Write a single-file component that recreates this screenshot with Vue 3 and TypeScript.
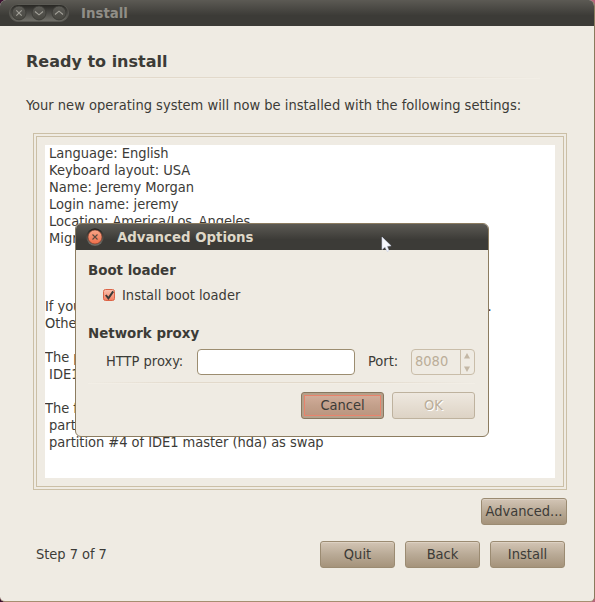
<script setup lang="ts">
import { ref } from 'vue'

const summary: string = [
  ' Language: English',
  ' Keyboard layout: USA',
  ' Name: Jeremy Morgan',
  ' Login name: jeremy',
  ' Location: America/Los_Angeles',
  ' Migration Assistant:',
  '',
  '',
  '',
  'If you continue, the changes listed below will be written to the disks.',
  'Otherwise, you will be able to make further changes manually.',
  '',
  'The partition tables of the following devices are changed:',
  ' IDE1 master (hda)',
  '',
  'The following partitions are going to be formatted:',
  ' partition #1 of IDE1 master (hda) as ext4',
  ' partition #4 of IDE1 master (hda) as swap',
].join('\n')

const proxy = ref('')
const installLoader = ref(true)
const steps: string[] = ['Quit', 'Back', 'Install']
</script>

<template>
  <div class="desktop">
    <main class="window">
      <header class="titlebar">
        <svg class="controls" width="60" height="18" viewBox="0 0 60 18">
          <defs>
            <linearGradient id="pill" x1="0" y1="0" x2="0" y2="1">
              <stop offset="0" stop-color="#252421" />
              <stop offset="1" stop-color="#73726c" />
            </linearGradient>
            <linearGradient id="knob" x1="0" y1="0" x2="0" y2="1">
              <stop offset="0" stop-color="#5d5c57" />
              <stop offset="1" stop-color="#474640" />
            </linearGradient>
          </defs>
          <rect x="0.5" y="0.5" width="59" height="17" rx="8.5" fill="url(#pill)" stroke="#5a5953" />
          <g fill="url(#knob)" stroke="#393834" stroke-width="0.8">
            <circle cx="10" cy="9" r="7" />
            <circle cx="30" cy="9" r="7" />
            <circle cx="50" cy="9" r="7" />
          </g>
          <g fill="none" stroke="#a3a199" stroke-width="1.1">
            <path d="M7.3 6.3l5.4 5.4M12.7 6.3l-5.4 5.4" />
            <path d="M26 7.5l4 3.4 4-3.4M46 10.5l4-3.4 4 3.4" />
          </g>
        </svg>
        <span class="title">Install</span>
      </header>
      <section class="page">
        <h1>Ready to install</h1>
        <div class="rule"></div>
        <p class="intro">Your new operating system will now be installed with the following settings:</p>
        <div class="frame"><div class="inner"><pre class="summary">{{ summary }}</pre></div></div>
        <div class="advanced-row"><button class="btn advanced">Advanced...</button></div>
        <footer class="nav">
          <span class="step">Step 7 of 7</span>
          <button v-for="s in steps" :key="s" class="btn">{{ s }}</button>
        </footer>
      </section>
    </main>

    <div class="dialog">
      <header class="dialog-bar">
        <svg class="close" width="18" height="18" viewBox="0 0 18 18">
          <defs>
            <linearGradient id="red" x1="0" y1="0" x2="0" y2="1">
              <stop offset="0" stop-color="#f8a688" />
              <stop offset="1" stop-color="#ef6e4a" />
            </linearGradient>
            <linearGradient id="ring" x1="0" y1="0" x2="0" y2="1">
              <stop offset="0" stop-color="#22211e" />
              <stop offset="1" stop-color="#77756e" />
            </linearGradient>
          </defs>
          <circle cx="9" cy="9" r="8.7" fill="url(#ring)" />
          <circle cx="9" cy="9" r="7" fill="url(#red)" stroke="#7b3523" stroke-width="0.6" />
          <path d="M6.5 6.5l5 5M11.5 6.5l-5 5" stroke="#5b4a40" stroke-width="1.1" />
        </svg>
        <span class="title">Advanced Options</span>
      </header>
      <div class="dialog-body">
        <h2>Boot loader</h2>
        <label class="check">
          <input v-model="installLoader" type="checkbox" />
          <svg width="13" height="13" viewBox="0 0 13 13">
            <defs>
              <linearGradient id="box" x1="0" y1="0" x2="0" y2="1">
                <stop offset="0" stop-color="#fbc3b0" />
                <stop offset="1" stop-color="#f47d5f" />
              </linearGradient>
            </defs>
            <rect x="0.5" y="0.5" width="11" height="11" rx="2" fill="url(#box)" stroke="#dc6446" />
            <path v-if="installLoader" d="M2.8 6l2.6 3.4L10.2 2.4" fill="none" stroke="#3c3b37" stroke-width="2" />
          </svg>
          <span>Install boot loader</span>
        </label>
        <h2>Network proxy</h2>
        <div class="proxy">
          <span class="proxy-label">HTTP proxy:</span>
          <input v-model="proxy" class="entry" type="text" />
          <span class="port-label">Port:</span>
          <div class="spin">
            <span class="value">8080</span>
            <svg width="13" height="24" viewBox="0 0 13 24">
              <g fill="#c3b7a5">
                <path d="M3 8.5L6 3l3 5.5z" />
                <path d="M3 16.5h6L6 22z" />
              </g>
            </svg>
          </div>
        </div>
        <div class="rule dialog-rule"></div>
        <div class="actions">
          <button class="btn cancel">Cancel</button>
          <button class="btn ok" disabled>OK</button>
        </div>
      </div>
    </div>

    <svg class="pointer" width="12" height="18" viewBox="0 0 12 18">
      <path d="M1 1v12.6l3-2.7 2 4.3q1.2 1 1.8-.6L6.2 10.3l3.9-.5z" fill="#f5f7fc" stroke="#c7cfe4" stroke-width="0.6" />
    </svg>
  </div>
</template>

<style>
body {
  margin: 0;
}
</style>

<style scoped>
.desktop {
  position: relative;
  width: 595px;
  height: 602px;
  overflow: hidden;
  background: linear-gradient(90deg, #3c1130 50%, #b8647c 50%);
  font-family: 'DejaVu Sans Condensed', 'DejaVu Sans', sans-serif;
  font-stretch: condensed;
  font-size: 14.53px;
  line-height: 17px;
  color: #3c3b37;
}
.window {
  box-sizing: border-box;
  height: 602px;
  display: flex;
  flex-direction: column;
  background: #efebe3;
  border-right: 1px solid #8a7a5c;
  border-bottom: 1px solid #a68e70;
  border-radius: 6px 6px 5px 5px;
  overflow: hidden;
}
.titlebar,
.dialog-bar {
  box-sizing: border-box;
  height: 26px;
  flex: none;
  display: flex;
  align-items: center;
  background: linear-gradient(#5c5a54, #3c3b37 60%);
}
.titlebar {
  padding-left: 9px;
}
.title {
  font-family: 'DejaVu Sans', sans-serif;
  font-stretch: normal;
  font-weight: bold;
  font-size: 13.33px;
  color: #908e87;
}
.titlebar .title {
  margin-left: 12px;
}
.page {
  padding: 26px 27px 0 26px;
}
h1,
h2,
p,
pre {
  margin: 0;
}
h1,
h2 {
  font-family: 'DejaVu Sans', sans-serif;
  font-stretch: normal;
  font-weight: bold;
}
h1 {
  font-size: 16px;
  line-height: 19px;
}
.rule {
  height: 1px;
  margin: 6px 27px 0 0;
  background: linear-gradient(90deg, #efebe3, #e2d9cb 25%, #e2d9cb 70%, #efebe3);
  border-bottom: 1px solid #f2eee6;
}
.intro {
  margin-top: 18px;
  white-space: nowrap;
}
.frame {
  margin: 19px 0 0 7px;
  padding: 2px;
  border: 1px solid #cbbfa6;
}
.inner {
  padding: 8px;
  border: 1px solid #cbbfa6;
}
.summary {
  box-sizing: border-box;
  height: 333px;
  background: #fff;
  font: inherit;
  letter-spacing: -0.04px;
  overflow: hidden;
}
.advanced-row {
  display: flex;
  justify-content: flex-end;
  margin-top: 8px;
}
.btn {
  box-sizing: border-box;
  width: 75px;
  height: 27px;
  padding: 0;
  border: 1px solid #9b8b72;
  border-radius: 3px;
  font: inherit;
  text-align: center;
  white-space: nowrap;
  color: #3c3b37;
  background: linear-gradient(#d3c5b5, #b9aa96 50%, #a5937b);
  box-shadow: inset 0 1px #ddd1c3;
}
.advanced {
  width: 86px;
}
.nav {
  display: flex;
  align-items: center;
  gap: 10px;
  margin-top: 16px;
  padding: 0 2px 0 10px;
}
.step {
  flex: 1;
  letter-spacing: -0.05px;
}
.dialog {
  position: absolute;
  left: 75px;
  top: 223px;
  box-sizing: border-box;
  width: 414px;
  height: 214px;
  border: 1px solid #8c7c60;
  border-radius: 6px;
  background: #efebe3;
  overflow: hidden;
}
.dialog-bar {
  padding-left: 10px;
}
.dialog-bar .title {
  margin-left: 13px;
  color: #dfd8c8;
}
.dialog-body {
  padding: 12px 13px 0 12px;
}
h2 {
  font-size: 13.4px;
  line-height: 17px;
}
.check {
  display: flex;
  align-items: center;
  margin: 8px 0 21px 15px;
}
.check input {
  display: none;
}
.check span {
  margin-left: 6px;
}
.proxy {
  display: flex;
  align-items: center;
  margin-top: 7px;
  padding-left: 18px;
}
.proxy-label {
  width: 91px;
  padding-bottom: 1px;
}
.entry {
  box-sizing: border-box;
  width: 158px;
  height: 26px;
  border: 1px solid #9c8d70;
  border-radius: 4px;
  padding: 0 4px;
  background: #fff;
  font: inherit;
}
.port-label {
  width: 43px;
  margin-left: 13px;
  padding-bottom: 1px;
}
.proxy-label,
.port-label,
.entry,
.spin {
  flex: none;
}
.spin {
  box-sizing: border-box;
  width: 64px;
  height: 26px;
  display: flex;
  align-items: center;
  border: 1px solid #c9bda9;
  border-radius: 4px;
  color: #bbae99;
}
.value {
  width: 46px;
  padding: 0 0 1px 3px;
}
.spin svg {
  flex: none;
  border-left: 1px solid #c9bda9;
}
.dialog-rule {
  margin: 7px 0 0;
}
.actions {
  display: flex;
  justify-content: flex-end;
  gap: 8px;
  margin-top: 8px;
}
.actions .btn {
  width: 83px;
}
.actions .cancel {
  border-color: #877860;
  background: linear-gradient(#d6b09e, #c3a08b 50%, #b9937c);
  box-shadow: inset 0 0 0 2px #b5a08a, inset 0 0 0 3px #e9836c;
}
.actions .ok {
  border-color: #beb29e;
  background: linear-gradient(#eee8df, #ddd3c5);
  box-shadow: none;
  color: #bbae99;
  text-shadow: 1px 1px #fff;
}
.pointer {
  position: absolute;
  left: 381px;
  top: 236px;
}
</style>
